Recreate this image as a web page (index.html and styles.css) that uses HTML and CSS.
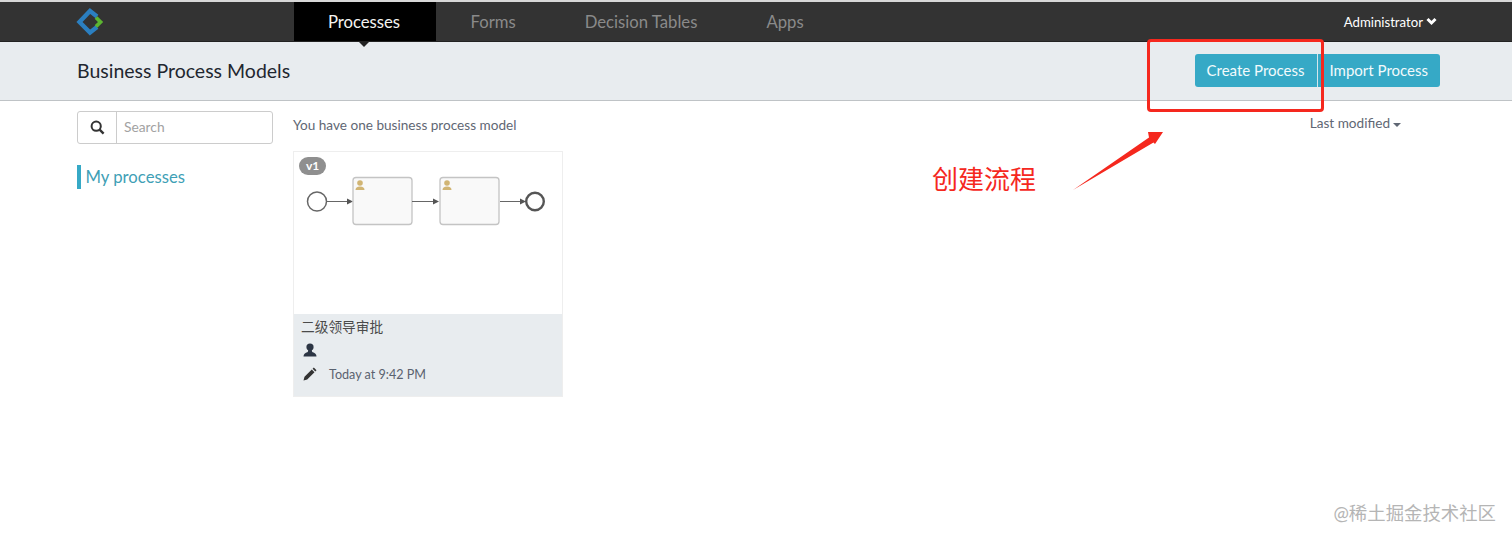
FILE: index.html
```html
<!DOCTYPE html>
<html lang="en">
<head>
    <meta charset="UTF-8">
    <title>Business Process Models</title>
    <link rel="stylesheet" href="styles.css">
</head>
<body>
    <header class="navbar">
        <div class="logo">
            <svg width="28" height="28" viewBox="0 0 28 28">
                <path d="M21 8.5 L14 3 L3.500 14 L14 24.500 L21 19" fill="none" stroke="#2b7fc0" stroke-width="4.4"/>
                <path d="M20 9.500 L24.500 14 L20 18.500" fill="none" stroke="#5cb531" stroke-width="3.800"/>
            </svg>
        </div>
        <nav class="nav-links">
            <a class="nav-link active">Processes</a>
            <a class="nav-link">Forms</a>
            <a class="nav-link">Decision Tables</a>
            <a class="nav-link">Apps</a>
        </nav>
        <div class="user">Administrator
            <svg width="11" height="9" viewBox="0 0 11 9"><path d="M1.5 2 L5.5 6 L9.5 2" fill="none" stroke="#fff" stroke-width="3"/></svg>
        </div>
    </header>

    <div class="subheader">
        <h2>Business Process Models</h2>
        <div class="btn-group">
            <button class="btn">Create Process</button>
            <button class="btn btn-import">Import Process</button>
        </div>
    </div>

    <div class="content">
        <aside class="sidebar">
            <div class="search">
                <span class="search-icon">
                    <svg width="15" height="15" viewBox="0 0 15 15"><circle cx="6.2" cy="6.2" r="4.6" fill="none" stroke="#333" stroke-width="2"/><path d="M9.6 9.6 L13.6 13.6" stroke="#333" stroke-width="2.4"/></svg>
                </span>
                <span class="search-input">Search</span>
            </div>
            <div class="filter">My processes</div>
        </aside>

        <main class="main">
            <div class="main-top">
                <span class="count">You have one business process model</span>
                <span class="sort">Last modified<i class="caret"></i></span>
            </div>
            <div class="card">
                <div class="thumb">
                    <span class="version">v1</span>
                    <svg class="diagram" width="268" height="162" viewBox="0 0 268 162">
                        <circle cx="23" cy="49.500" r="9.5" fill="#fff" stroke="#666" stroke-width="1.5"/>
                        <path d="M33 49.500 H54" stroke="#666" stroke-width="1"/>
                        <path d="M53 46.500 L59 49.500 L53 52.500 Z" fill="#555"/>
                        <rect x="59" y="25.500" width="59" height="47" rx="3" fill="#f9f9f9" stroke="#c4c4c4" stroke-width="1.3"/>
                        <circle cx="66" cy="31" r="2.8" fill="#d1b574"/>
                        <path d="M61.500 38 Q61.500 34.500 66 34.500 Q70.500 34.500 70.500 38 Z" fill="#d1b574"/>
                        <path d="M118 49.500 H140" stroke="#666" stroke-width="1"/>
                        <path d="M139 46.500 L145 49.500 L139 52.500 Z" fill="#555"/>
                        <rect x="146" y="25.500" width="59" height="47" rx="3" fill="#f9f9f9" stroke="#c4c4c4" stroke-width="1.3"/>
                        <circle cx="153" cy="31" r="2.8" fill="#d1b574"/>
                        <path d="M148.500 38 Q148.500 34.500 153 34.500 Q157.500 34.500 157.500 38 Z" fill="#d1b574"/>
                        <path d="M206 49.500 H228" stroke="#666" stroke-width="1"/>
                        <path d="M226 46.500 L232 49.500 L226 52.500 Z" fill="#555"/>
                        <circle cx="241" cy="49.500" r="8.800" fill="#fff" stroke="#555" stroke-width="2.400"/>
                    </svg>
                </div>
                <div class="card-info">
                    <div class="card-title">二级领导审批</div>
                    <div class="card-row">
                        <svg width="14" height="14" viewBox="0 0 14 14"><circle cx="7" cy="4" r="3.6" fill="#2c3544"/><path d="M5.200 7 L4.800 9 Q0.500 10 0.500 13.500 H13.500 Q13.500 10 9.200 9 L8.800 7 Z" fill="#2c3544"/></svg>
                    </div>
                    <div class="card-row card-date">
                        <svg width="14" height="14" viewBox="0 0 14 14"><path d="M0.500 13.500 L1.500 9.800 L8.800 2.500 L11.500 5.200 L4.200 12.500 Z M9.600 1.700 L10.800 0.500 L13.500 3.200 L12.300 4.400 Z" fill="#333"/></svg>
                        <span class="date-text">Today at 9:42 PM</span>
                    </div>
                </div>
            </div>
        </main>
    </div>

    <!-- red annotation drawn on top of the screenshot -->
    <div class="mark-box"></div>
    <div class="mark-label">创建流程</div>
    <svg class="mark-arrow" width="100" height="70" viewBox="0 0 100 70">
        <path d="M1 63 L77 10.500 L76 5 L91 5 L83 17 L81.500 15.500 Z" fill="#f5281e"/>
    </svg>
    <div class="watermark">@稀土掘金技术社区</div>
</body>
</html>
```

FILE: styles.css
```css
html, body {
    margin: 0;
    padding: 0;
}
body {
    font-family: Lato, "Noto Sans CJK SC", sans-serif;
    background-color: #fff;
    height: 541px;
    overflow: hidden;
    border-top: 2px solid #d8d8d8;
    box-sizing: border-box;
    color: #5a6270;
}
.navbar {
    display: flex;
    align-items: stretch;
    height: 39px;
    background-color: #333;
    padding-left: 76px;
    padding-right: 75px;
    border-bottom: 1px solid #222;
}
.logo {
    width: 218px;
    display: flex;
    align-items: center;
}
.nav-links {
    display: flex;
    flex: 1;
}
.nav-link {
    position: relative;
    display: flex;
    align-items: center;
    font-size: 16.7px;
    color: #8a8a8a;
    padding: 1px 34.5px 0;
}
.nav-link.active {
    background-color: #000;
    color: #f4f4f0;
    width: 142px;
    box-sizing: border-box;
    justify-content: center;
    padding: 1px 2px 0 0;
}
.nav-link.active::after {
    content: "";
    position: absolute;
    left: 64px;
    bottom: -6px;
    border-left: 6px solid transparent;
    border-right: 6px solid transparent;
    border-top: 6px solid #222;
}
.user {
    display: flex;
    align-items: center;
    gap: 3px;
    color: #fff;
    font-size: 13.2px;
}
.subheader {
    display: flex;
    align-items: center;
    justify-content: space-between;
    height: 58px;
    background-color: #e8ecef;
    border-bottom: 1px solid #bfc3c6;
    padding-left: 77px;
    padding-right: 72px;
}
.subheader h2 {
    margin: 0 0 2px;
    font-size: 19.5px;
    font-weight: 400;
    color: #1f2730;
}
.btn-group {
    display: flex;
    margin-bottom: 2px;
}
.btn {
    height: 33px;
    border: 0;
    padding: 0 12px;
    font-family: inherit;
    font-size: 15px;
    color: #f2fafc;
    background-color: #36a9c6;
    border-radius: 3px 0 0 3px;
}
.btn-import {
    border-left: 1px solid #d5e6ec;
    border-radius: 0 3px 3px 0;
}
.content {
    display: flex;
    padding: 10px 0 0 77px;
}
.sidebar {
    width: 216px;
    flex-shrink: 0;
}
.search {
    display: flex;
    width: 196px;
    height: 33px;
    box-sizing: border-box;
    border: 1px solid #ccc;
    border-radius: 3px;
}
.search-icon {
    width: 38px;
    display: flex;
    align-items: center;
    justify-content: center;
    border-right: 1px solid #ccc;
}
.search-input {
    display: flex;
    align-items: center;
    padding: 0 0 2px 7px;
    font-size: 13.8px;
    color: #a2a2a2;
}
.filter {
    margin-top: 21px;
    border-left: 4px solid #36a9c6;
    padding-left: 4.5px;
    font-size: 16.7px;
    line-height: 24px;
    color: #3f9fb6;
}
.main {
    width: 1108px;
}
.main-top {
    display: flex;
    justify-content: space-between;
    height: 40px;
    font-size: 13.6px;
    padding-top: 6px;
    box-sizing: border-box;
    color: #5f6774;
}
.sort {
    margin-top: -2px;
    display: flex;
    align-items: flex-start;
}
.caret {
    margin: 8px 0 0 3px;
    border-left: 4px solid transparent;
    border-right: 4px solid transparent;
    border-top: 4px solid #5f6774;
}
.card {
    width: 270px;
    height: 246px;
    box-sizing: border-box;
    border: 1px solid #eee;
    display: flex;
    flex-direction: column;
}
.thumb {
    position: relative;
    height: 162px;
}
.version {
    position: absolute;
    left: 5px;
    top: 5px;
    padding: 0 7px;
    height: 18px;
    line-height: 17px;
    border-radius: 9px;
    background-color: #8f8f8f;
    color: #fff;
    font-size: 12px;
    font-weight: 700;
}
.diagram {
    display: block;
}
.card-info {
    flex: 1;
    background-color: #e8ecef;
    padding: 3px 7px;
}
.card-title {
    font-size: 13.7px;
    line-height: 20px;
    color: #4a4a4a;
}
.card-row {
    display: flex;
    align-items: center;
    height: 23px;
    padding-left: 2px;
    margin-top: 1px;
}
.card-date {
    gap: 12px;
    font-size: 12.6px;
    color: #5a6270;
}
.date-text {
    padding-top: 2px;
}
.mark-box {
    position: absolute;
    left: 1147px;
    top: 39px;
    width: 177px;
    height: 73px;
    box-sizing: border-box;
    border: 3px solid #f5281e;
    border-radius: 4px;
}
.mark-label {
    position: absolute;
    left: 932px;
    top: 162px;
    font-size: 26px;
    line-height: 34px;
    color: #f5281e;
}
.mark-arrow {
    position: absolute;
    left: 1072px;
    top: 127px;
}
.watermark {
    position: absolute;
    right: 16px;
    top: 501px;
    font-size: 18.4px;
    line-height: 24px;
    color: #b5b5b5;
}
```
